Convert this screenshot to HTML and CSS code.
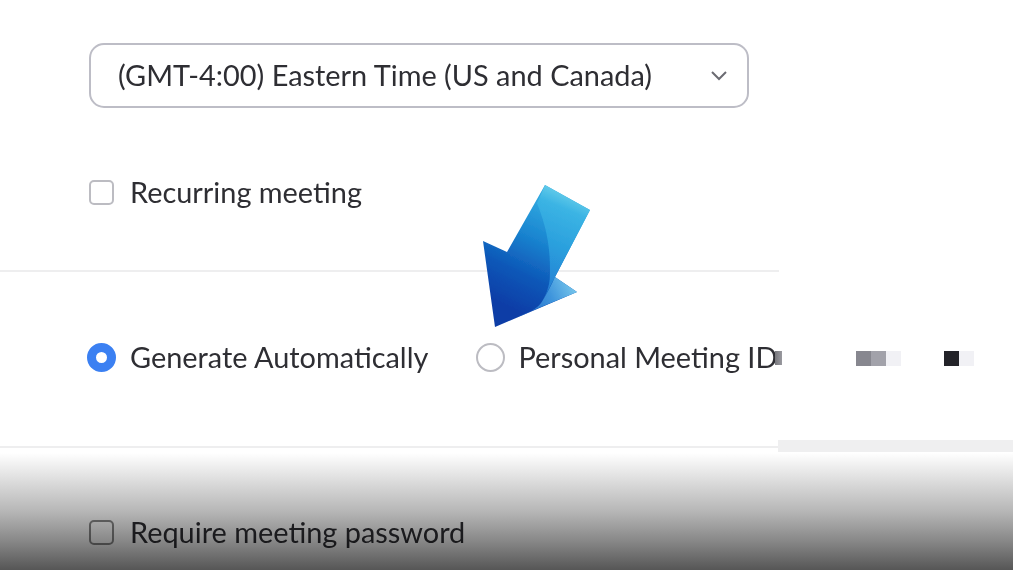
FILE: index.html
```html
<!DOCTYPE html>
<html lang="en">
<head>
<meta charset="utf-8">
<title>Schedule meeting</title>
<link rel="stylesheet" href="styles.css">
</head>
<body>
<main class="form">
  <section class="section section-time">
    <div class="select">
      <span>(GMT-4:00) Eastern Time (US and Canada)</span>
      <svg class="chevron" width="18" height="11" viewBox="0 0 18 11"><path d="M2 2l7 7 7-7" fill="none" stroke="#6b6b72" stroke-width="2"/></svg>
    </div>
    <label class="option option-recurring"><span class="check"></span><span>Recurring meeting</span></label>
  </section>
  <section class="section section-id">
    <div class="id-row">
      <label class="option"><span class="radio radio-on"></span><span>Generate Automatically</span></label>
      <label class="option option-personal"><span class="radio"></span><span>Personal Meeting ID</span></label>
    </div>
  </section>
  <section class="section-pass">
    <label class="option"><span class="check"></span><span>Require meeting password</span></label>
  </section>
</main>

<span class="pixel-clip"></span>
<div class="mosaic">
  <span class="pixel-group"><i class="m1"></i><i class="m2"></i><i class="m3"></i></span>
  <span class="pixel-group"><i class="m4"></i><i class="m5"></i></span>
</div>
<div class="band"></div>

<div class="shade"></div>

<svg class="arrow" width="112" height="148" viewBox="0 0 112 148">
  <defs>
    <linearGradient id="arrowBase" gradientUnits="userSpaceOnUse" x1="15" y1="120" x2="62" y2="22">
      <stop offset="0" stop-color="#0a3ca6"/>
      <stop offset="0.35" stop-color="#0e58b8"/>
      <stop offset="0.7" stop-color="#1a85d0"/>
      <stop offset="1" stop-color="#2ea4de"/>
    </linearGradient>
    <linearGradient id="arrowGloss" gradientUnits="userSpaceOnUse" x1="58" y1="115" x2="100" y2="15">
      <stop offset="0" stop-color="#2478d2"/>
      <stop offset="0.5" stop-color="#2a9fdd"/>
      <stop offset="0.85" stop-color="#3bb4e4"/>
      <stop offset="1" stop-color="#66cdea"/>
    </linearGradient>
    <linearGradient id="arrowTip" gradientUnits="userSpaceOnUse" x1="35" y1="135" x2="96" y2="105">
      <stop offset="0" stop-color="#1a5ec2"/>
      <stop offset="0.6" stop-color="#3f95dc"/>
      <stop offset="1" stop-color="#79c8ec"/>
    </linearGradient>
    <filter id="soft"><feGaussianBlur stdDeviation="0.7"/></filter>
  </defs>
  <g filter="url(#soft)">
    <path d="M2 58L26 69 64 2 109 27 74 94 96 109 14 144Z" fill="url(#arrowBase)"/>
    <path d="M56 20L64 2 109 27 74 94 61 119C67 108 69 100 69 90 69 70 68 50 56 20Z" fill="url(#arrowGloss)"/>
    <path d="M74 94L96 109 36 134C48 130 58 125 62 117 66 110 70 103 74 94Z" fill="url(#arrowTip)"/>
  </g>
</svg>
</body>
</html>
```
FILE: styles.css
```css
* { box-sizing: border-box; }
html, body { margin: 0; height: 100%; }
body {
  position: relative;
  height: 570px;
  overflow: hidden;
  background: #fff;
  font-family: Lato, "Liberation Sans", sans-serif;
  font-size: 28.9px;
  color: #2e2e33;
}
.form { width: 779px; overflow: hidden; }
.section { border-bottom: 2px solid #eeeeef; }
.section-time { height: 272px; padding: 43px 0 0 89px; }
.section-id { height: 176px; padding-top: 65px; }
.section-pass { padding: 64px 0 0 89px; }
.select {
  width: 660px;
  height: 65px;
  display: flex;
  align-items: center;
  justify-content: space-between;
  padding: 0 19px 2px 27px;
  border: 2px solid #bdbdc6;
  border-radius: 15px;
}
.chevron { margin-top: 2px; }
.option { display: inline-flex; align-items: center; gap: 16px; white-space: nowrap; height: 40px; }
.option span:last-child { margin-top: -2px; }
.option-recurring { margin-top: 64px; }
.option-personal { gap: 15px; }
.check {
  flex: none;
  width: 25px;
  height: 25px;
  border: 2px solid #bcbcc2;
  border-radius: 5px;
}
.section-pass .check { border-color: #8a8a8a; }
.radio {
  flex: none;
  width: 29px;
  height: 29px;
  margin-right: -2px;
  border: 2px solid #bcbcc2;
  border-radius: 50%;
}
.radio-on { border: 9.5px solid #3b80f2; background: #fff; }
.id-row {
  display: flex;
  align-items: center;
  gap: 48px;
  padding-left: 87px;
  height: 40px;
}
.pixel-clip {
  position: absolute;
  left: 775px;
  top: 351px;
  width: 7px;
  height: 14px;
  background: linear-gradient(90deg, #77777c, #9a9aa0);
}
.mosaic {
  position: absolute;
  left: 856px;
  top: 351px;
  display: flex;
  gap: 43px;
}
.pixel-group { display: flex; }
.pixel-group i { display: block; width: 15px; height: 14.5px; }
.m1 { background: #87878f; }
.m2 { background: #a2a2aa; }
.m3 { background: #f1f1f5; }
.m4 { background: #232329; }
.m5 { background: #f1f1f5; }
.band {
  position: absolute;
  left: 778px;
  top: 440px;
  right: 0;
  height: 12px;
  background: #efeff0;
  filter: blur(0.7px);
}
.shade {
  position: absolute;
  left: 0;
  right: 0;
  top: 453px;
  bottom: 0;
  background: linear-gradient(#fff 0, #e2e2e2 20%, #b6b6b6 50%, #888 75%, #565656 100%);
  mix-blend-mode: multiply;
}
.arrow { position: absolute; left: 481px; top: 183px; }
```
